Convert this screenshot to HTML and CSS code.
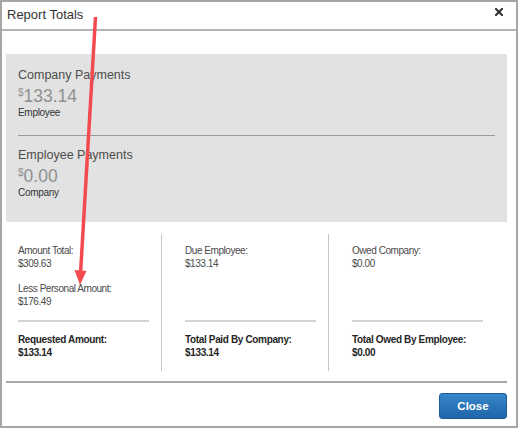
FILE: index.html
```html
<!DOCTYPE html>
<html lang="en">
<head>
    <meta charset="UTF-8">
    <meta name="viewport" content="width=device-width, initial-scale=1.0">
    <title>Report Totals</title>
    <link rel="stylesheet" href="styles.css">
</head>
<body>
    <div class="modal">
        <div class="modal-header">
            <span class="modal-title">Report Totals</span>
            <span class="modal-x">
                <svg width="8" height="8" viewBox="0 0 8 8"><path d="M1 1L7 7M7 1L1 7" stroke="#333" stroke-width="2.1" stroke-linecap="square"/></svg>
            </span>
        </div>

        <div class="modal-body">
            <!-- grey summary panel -->
            <div class="summary">
                <div class="pay-block">
                    <div class="pay-title">Company Payments</div>
                    <div class="pay-amount"><span class="cur">$</span>133.14</div>
                    <div class="pay-who">Employee</div>
                </div>
                <div class="pay-rule"></div>
                <div class="pay-block">
                    <div class="pay-title">Employee Payments</div>
                    <div class="pay-amount"><span class="cur">$</span>0.00</div>
                    <div class="pay-who">Company</div>
                </div>
            </div>

            <!-- three columns of totals -->
            <div class="totals">
                <div class="col">
                    <div class="group">
                        <div class="item">
                            <div>Amount Total:</div>
                            <div>$309.63</div>
                        </div>
                        <div class="item">
                            <div>Less Personal Amount:</div>
                            <div>$176.49</div>
                        </div>
                    </div>
                    <div class="col-rule"></div>
                    <div class="item strong">
                        <div>Requested Amount:</div>
                        <div>$133.14</div>
                    </div>
                </div>
                <div class="col">
                    <div class="group">
                        <div class="item">
                            <div>Due Employee:</div>
                            <div>$133.14</div>
                        </div>
                    </div>
                    <div class="col-rule"></div>
                    <div class="item strong">
                        <div>Total Paid By Company:</div>
                        <div>$133.14</div>
                    </div>
                </div>
                <div class="col">
                    <div class="group">
                        <div class="item">
                            <div>Owed Company:</div>
                            <div>$0.00</div>
                        </div>
                    </div>
                    <div class="col-rule"></div>
                    <div class="item strong">
                        <div>Total Owed By Employee:</div>
                        <div>$0.00</div>
                    </div>
                </div>
            </div>
        </div>

        <div class="modal-footer">
            <button class="btn-close">Close</button>
        </div>

        <!-- red annotation arrow -->
        <svg class="arrow" width="518" height="428" viewBox="0 0 518 428">
            <line x1="95.5" y1="17" x2="80.5" y2="274" stroke="#f24a4e" stroke-width="3.5"/>
            <polygon points="74.5,270 86.5,271 80,285" fill="#f24a4e"/>
        </svg>
    </div>
</body>
</html>
```

FILE: styles.css
```css
body {
    margin: 0;
    font-family: "Liberation Sans", Arial, sans-serif;
    background-color: #fff;
}
.modal {
    position: relative;
    box-sizing: border-box;
    width: 518px;
    height: 428px;
    border: 2px solid #a6a6a6;
    background-color: #fff;
}
.modal-header {
    display: flex;
    justify-content: space-between;
    height: 27px;
    padding: 0 13px 0 5px;
    border-bottom: 2px solid #b3b3b3;
}
.modal-title {
    margin-top: 5px;
    font-size: 13px;
    line-height: 16px;
    color: #333;
}
.modal-x {
    margin-top: 6px;
    line-height: 0;
}
.modal-body {
    padding: 23px 9px 0 4px;
}
.summary {
    height: 168px;
    box-sizing: border-box;
    padding: 14px 12px 0;
    background-color: #e1e2e1;
}
.pay-title {
    font-size: 12.5px;
    line-height: 15px;
    color: #4d4d4d;
}
.pay-amount {
    margin-top: 3px;
    font-size: 17.5px;
    line-height: 20px;
    color: #909090;
}
.pay-amount .cur {
    font-size: 10px;
    line-height: 0;
    vertical-align: 6px;
}
.pay-who {
    margin-top: 1px;
    font-size: 10px;
    line-height: 12px;
    letter-spacing: -0.3px;
    color: #333;
}
.pay-rule {
    height: 1px;
    margin: 16px 0 12px;
    background-color: #9a9a9a;
}
.totals {
    display: flex;
    margin-top: 12px;
    padding-left: 12px;
}
.col {
    width: 131px;
    padding: 10px 12px 12px 0;
    font-size: 10px;
    line-height: 13px;
    letter-spacing: -0.45px;
    color: #4a4a4a;
}
.col + .col {
    padding-left: 23px;
    border-left: 1px solid #c4c4c4;
}
.group {
    height: 76px;
}
.item + .item {
    margin-top: 12px;
}
.col-rule {
    height: 2px;
    margin-bottom: 11px;
    background-color: #d4d4d4;
}
.strong {
    font-weight: bold;
    letter-spacing: -0.35px;
    color: #262626;
}
.modal-footer {
    display: flex;
    justify-content: flex-end;
    margin: 10px 9px 0 4px;
    padding-top: 10px;
    border-top: 2px solid #a9a9a9;
}
.btn-close {
    width: 68px;
    height: 26px;
    border: 1px solid #1c5c9c;
    border-radius: 3px;
    background: linear-gradient(#3686c8, #1f65aa);
    color: #fff;
    font-family: "Liberation Sans", Arial, sans-serif;
    font-size: 11.5px;
    font-weight: bold;
}
.arrow {
    position: absolute;
    top: -2px;
    left: -2px;
    pointer-events: none;
}
```
